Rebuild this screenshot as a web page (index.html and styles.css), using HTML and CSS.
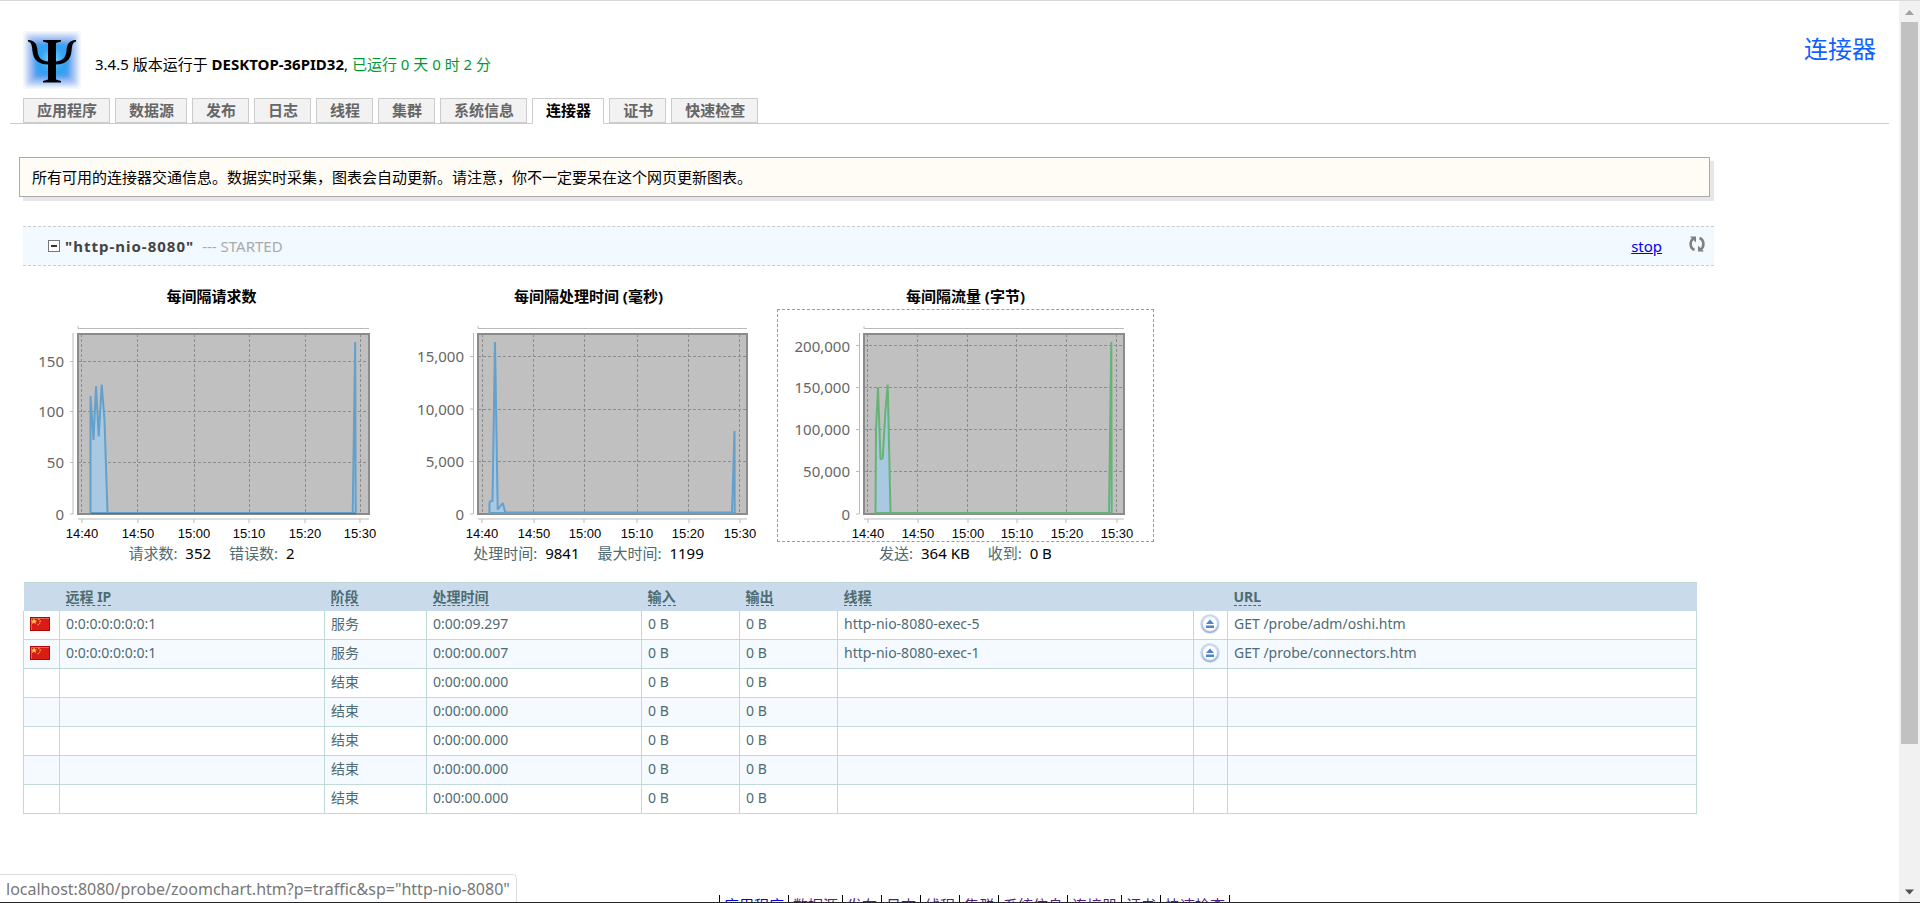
FILE: index.html
```html
<!DOCTYPE html>
<html lang="zh-CN">
<head>
<meta charset="utf-8">
<title>连接器</title>
<link rel="stylesheet" href="styles.css">
</head>
<body>
<div class="viewport">
<div class="page">
  <header class="header">
    <div class="brand">
      <svg class="logo" viewBox="0 0 58 58" aria-label="Probe">
        <defs>
          <radialGradient id="glow" cx="50%" cy="48%" r="60%">
            <stop offset="0" stop-color="#8fdcff"/>
            <stop offset="0.55" stop-color="#2ba3f2"/>
            <stop offset="1" stop-color="#4a9cf0"/>
          </radialGradient>
          <filter id="soft" x="-20%" y="-20%" width="140%" height="140%"><feGaussianBlur stdDeviation="2"/></filter>
        </defs>
        <rect x="2" y="2" width="54" height="54" fill="#cfe0f8" filter="url(#soft)"/>
        <rect x="6" y="6" width="46" height="46" fill="#9dbcf2" filter="url(#soft)"/>
        <rect x="11" y="11" width="36" height="36" fill="url(#glow)" filter="url(#soft)"/>
        <path d="M20 9h18v1.500l-5 1.500v18.500c8-1 10-5 10.500-11 .5-6 2-10 9.500-10.500v1.500c-4 1-4 5-4.500 10-1 8-5 12.500-15.500 13v15l5 1.500v1.500H20v-1.500l5-1.500v-15c-10.500-.5-14.500-5-15.500-13-.5-5-.5-9-4.500-10V9c7.500.5 9 4.500 9.500 10.500.5 6 2.500 10 10.500 11V12l-5-1.500z" fill="#000"/>
      </svg>
      <p class="version">3.4.5 版本运行于 <b>DESKTOP-36PID32</b>, <span class="uptime">已运行 0 天 0 时 2 分</span></p>
    </div>
    <h1 class="title">连接器</h1>
  </header>

  <nav class="tabs">
    <a class="tab" href="#">应用程序</a>
    <a class="tab" href="#">数据源</a>
    <a class="tab" href="#">发布</a>
    <a class="tab" href="#">日志</a>
    <a class="tab" href="#">线程</a>
    <a class="tab" href="#">集群</a>
    <a class="tab" href="#">系统信息</a>
    <a class="tab tab-active" href="#">连接器</a>
    <a class="tab" href="#">证书</a>
    <a class="tab" href="#">快速检查</a>
  </nav>

  <p class="notice">所有可用的连接器交通信息。数据实时采集，图表会自动更新。请注意，你不一定要呆在这个网页更新图表。</p>

  <main class="connector">
    <div class="bar">
      <button class="icon-button" type="button" aria-label="折叠">
        <svg width="12" height="12" viewBox="0 0 12 12"><rect x="0.500" y="0.500" width="11" height="11" fill="#fff" stroke="#777"/><path d="M3 6h6" stroke="#333" stroke-width="2"/></svg>
      </button>
      <h2 class="name">"http-nio-8080"</h2>
      <span class="state">--- STARTED</span>
      <a class="stop" href="#">stop</a>
      <button class="icon-button refresh" type="button" aria-label="刷新">
        <svg width="16" height="16" viewBox="0 0 16 16" fill="none" stroke="#808080" stroke-width="2.600"><path d="M5.500 14C.5 12 .5 5 4.500 2.500M10.500 2C15.500 4 15.500 11 11.500 13.500"/><path d="M1 .5h6v6zM15 15.500H9v-6z" fill="#808080" stroke="none"/></svg>
      </button>
    </div>

    <div class="charts">
      <section class="chart">
        <h3 class="chart-title">每间隔请求数</h3>
        <a class="chart-link" href="#">
          <svg class="plot" viewBox="24 310 375 231" role="img" aria-label="每间隔请求数">
            <rect class="area" x="78" y="334" width="291" height="180"/>
            <path class="axis" d="M78 326v2.500h291M73 333v181M78 519h291M70 361.500h3M70 411.500h3M70 462.500h3M70 514h3M82 519v4M138 519v4M194 519v4M249 519v4M305 519v4M360 519v4"/>
            <path class="grid" d="M78 361.500h291M78 411.500h291M78 462.500h291M81.500 334v180M137.500 334v180M194.500 334v180M249.500 334v180M305.500 334v180M360.500 334v180"/>
            <path class="series" d="M90.500 513V396L93.500 440 96 386 98.700 436.500 101.700 384.500 104.500 420 107.500 513H352.700L355.200 342 355.700 513z"/>
            <path class="base" d="M91 513.500h265"/>
            <g class="y-labels"><text x="64" y="367">150</text><text x="64" y="417">100</text><text x="64" y="468">50</text><text x="64" y="520">0</text></g>
            <g class="x-labels"><text x="82" y="538">14:40</text><text x="138" y="538">14:50</text><text x="194" y="538">15:00</text><text x="249" y="538">15:10</text><text x="305" y="538">15:20</text><text x="360" y="538">15:30</text></g>
          </svg>
        </a>
        <p class="stats"><span>请求数: <b>352</b></span><span>错误数: <b>2</b></span></p>
      </section>

      <section class="chart">
        <h3 class="chart-title">每间隔处理时间 (毫秒)</h3>
        <a class="chart-link" href="#">
          <svg class="plot" viewBox="401 310 375 231" role="img" aria-label="每间隔处理时间">
            <rect class="area" x="478" y="334" width="269" height="180"/>
            <path class="axis" d="M478 326v2.500h269M473.500 333v181M478 519h269M470 356.500h3M470 409h3M470 461.500h3M470 514h3M482 519v4M534 519v4M584 519v4M637 519v4M689 519v4M740 519v4"/>
            <path class="grid" d="M478 356.500h269M478 409.500h269M478 461.500h269M482.500 334v180M533.500 334v180M584.500 334v180M637.500 334v180M688.500 334v180M739.500 334v180"/>
            <path class="series" d="M489.500 513V501.700L492.500 501 495 342 497.700 509.500 502.800 503 505.300 512.500H732L734.500 431 734.700 513z"/>
            <g class="y-labels"><text x="464" y="362">15,000</text><text x="464" y="415">10,000</text><text x="464" y="467">5,000</text><text x="464" y="520">0</text></g>
            <g class="x-labels"><text x="482" y="538">14:40</text><text x="534" y="538">14:50</text><text x="585" y="538">15:00</text><text x="637" y="538">15:10</text><text x="688" y="538">15:20</text><text x="740" y="538">15:30</text></g>
          </svg>
        </a>
        <p class="stats"><span>处理时间: <b>9841</b></span><span>最大时间: <b>1199</b></span></p>
      </section>

      <section class="chart">
        <h3 class="chart-title">每间隔流量 (字节)</h3>
        <a class="chart-link chart-hover" href="#">
          <svg class="plot" viewBox="778 310 375 231" role="img" aria-label="每间隔流量">
            <rect class="area" x="864" y="334" width="260" height="180"/>
            <path class="axis" d="M864 326v2.500h260M859.500 333v181M864 519h260M856 345.500h3M856 387.500h3M856 429.500h3M856 471.500h3M856 514h3M868 519v4M918 519v4M968 519v4M1017 519v4M1066 519v4M1117 519v4"/>
            <path class="grid" d="M864 345.500h260M864 387.500h260M864 429.500h260M864 471.500h260M867.500 334v180M917.500 334v180M967.500 334v180M1016.500 334v180M1066.500 334v180M1116.500 334v180"/>
            <path class="series series-green" d="M875.500 513L876 430 878 387.500 880.500 459.300 882.700 458.300 885.500 410 887.700 384.500 890.500 513H1109L1111.300 342 1111.700 513z"/>
            <g class="y-labels"><text x="850" y="352">200,000</text><text x="850" y="393">150,000</text><text x="850" y="435">100,000</text><text x="850" y="477">50,000</text><text x="850" y="520">0</text></g>
            <g class="x-labels"><text x="868" y="538">14:40</text><text x="918" y="538">14:50</text><text x="968" y="538">15:00</text><text x="1017" y="538">15:10</text><text x="1067" y="538">15:20</text><text x="1117" y="538">15:30</text></g>
          </svg>
        </a>
        <p class="stats"><span>发送: <b>364 KB</b></span><span>收到: <b>0 B</b></span></p>
      </section>
    </div>

    <svg class="symbols" aria-hidden="true">
      <symbol id="flag" viewBox="0 0 20 14">
        <rect width="20" height="14" fill="#b00808"/>
        <rect x="1" y="1" width="18" height="12" fill="#e2605c"/>
        <rect x="2" y="2" width="17" height="11" fill="#da1c16"/>
        <path d="M4 1.500l1 2h2L5.500 5l.5 2-2-1.200L2 7l.5-2L1 3.500h2z" fill="#ffc94a"/>
        <path d="M8 1.500h1.500V3H8zM9.500 3.500H11V5H9.500zM9 5.800h1.200v1.200H9zM7.500 7h1.300v1.200H7.500z" fill="#f7a33a"/>
      </symbol>
      <symbol id="eject" viewBox="0 0 20 20">
        <circle cx="10" cy="10" r="9.800" fill="#c4d8f4"/>
        <circle cx="10" cy="10.800" r="8.200" fill="#9fb0c9"/>
        <circle cx="10" cy="9.800" r="7.700" fill="#dfe6f1"/>
        <circle cx="10" cy="9.700" r="6.700" fill="#fcfdff"/>
        <path d="M10 5.500l4 4.500H6zM6 11.500h8v2.500H6z" fill="#4f83cb"/>
      </symbol>
    </svg>

    <table class="requests">
      <colgroup><col class="c-flag"><col class="c-ip"><col class="c-stage"><col class="c-time"><col class="c-io"><col class="c-io"><col class="c-thread"><col class="c-action"><col></colgroup>
      <thead>
        <tr><th></th><th><a href="#">远程 IP</a></th><th><a href="#">阶段</a></th><th><a href="#">处理时间</a></th><th><a href="#">输入</a></th><th><a href="#">输出</a></th><th><a href="#">线程</a></th><th></th><th><a href="#">URL</a></th></tr>
      </thead>
      <tbody>
        <tr><td><svg class="flag"><use href="#flag"/></svg></td><td>0:0:0:0:0:0:0:1</td><td>服务</td><td>0:00:09.297</td><td>0 B</td><td>0 B</td><td>http-nio-8080-exec-5</td><td><svg class="eject"><use href="#eject"/></svg></td><td>GET /probe/adm/oshi.htm</td></tr>
        <tr><td><svg class="flag"><use href="#flag"/></svg></td><td>0:0:0:0:0:0:0:1</td><td>服务</td><td>0:00:00.007</td><td>0 B</td><td>0 B</td><td>http-nio-8080-exec-1</td><td><svg class="eject"><use href="#eject"/></svg></td><td>GET /probe/connectors.htm</td></tr>
        <tr><td></td><td></td><td>结束</td><td>0:00:00.000</td><td>0 B</td><td>0 B</td><td></td><td></td><td></td></tr>
        <tr><td></td><td></td><td>结束</td><td>0:00:00.000</td><td>0 B</td><td>0 B</td><td></td><td></td><td></td></tr>
        <tr><td></td><td></td><td>结束</td><td>0:00:00.000</td><td>0 B</td><td>0 B</td><td></td><td></td><td></td></tr>
        <tr><td></td><td></td><td>结束</td><td>0:00:00.000</td><td>0 B</td><td>0 B</td><td></td><td></td><td></td></tr>
        <tr><td></td><td></td><td>结束</td><td>0:00:00.000</td><td>0 B</td><td>0 B</td><td></td><td></td><td></td></tr>
      </tbody>
    </table>
  </main>

  <footer class="footer">
    <a class="unvisited" href="#">应用程序</a>
    <a href="#">数据源</a>
    <a href="#">发布</a>
    <a href="#">日志</a>
    <a href="#">线程</a>
    <a href="#">集群</a>
    <a href="#">系统信息</a>
    <a href="#">连接器</a>
    <a href="#">证书</a>
    <a href="#">快速检查</a>
  </footer>
</div>

<div class="scrollbar">
  <svg class="arrow" viewBox="0 0 21 21"><path d="M10.500 9l4.500 5H6z" fill="#a0a0a0"/></svg>
  <div class="track"><div class="thumb"></div></div>
  <svg class="arrow" viewBox="0 0 21 21"><path d="M10.500 13.500l4.500-5H6z" fill="#505050"/></svg>
</div>
</div>
<div class="status">localhost:8080/probe/zoomchart.htm?p=traffic&amp;sp="http-nio-8080"</div>
</body>
</html>
```
FILE: styles.css
```css
* {
  box-sizing: border-box;
}

body {
  margin: 0;
  background: #fff;
  color: #000;
  font: 15px/20px "Noto Sans", "Noto Sans CJK SC", sans-serif;
}

h1, h2, h3, p {
  margin: 0;
}

.viewport {
  display: flex;
  height: 100vh;
  overflow: hidden;
  border-top: 1px solid #d9d9de;
  border-bottom: 1px solid #26262a;
}

.page {
  flex: 1;
  min-width: 0;
  overflow: hidden;
  padding: 0 10px;
}

.header {
  display: flex;
  justify-content: space-between;
  align-items: flex-start;
  height: 97px;
  padding: 30px 13px 0;
}

.brand {
  display: flex;
  gap: 14px;
}

.logo {
  width: 58px;
  height: 58px;
}

.version {
  padding-top: 23px;
}

.uptime {
  color: #093;
}

.title {
  color: #0f62ff;
  font-size: 24px;
  font-weight: 400;
  line-height: 36px;
}

.tabs {
  display: flex;
  gap: 5px;
  padding-left: 13px;
  border-bottom: 1px solid #ccc;
}

.tab {
  padding: 1px 12px 2px 13px;
  border: 1px solid #ccc;
  background: #f2f2f2;
  color: #666;
  font-weight: 700;
  text-decoration: none;
}

.tab-active {
  margin-bottom: -1px;
  border-bottom-color: #fff;
  background: #fff;
  color: #000;
}

.notice {
  width: 90%;
  margin: 33px 0 29px 9px;
  padding: 9px 12px;
  border: 1px solid #aaa;
  background: #fffcf5;
  box-shadow: 4px 4px 0 #e6e6e6;
}

.connector {
  width: 90%;
  margin-left: 13px;
}

.bar {
  display: flex;
  align-items: center;
  height: 40px;
  padding: 0 9px 0 25px;
  border: dashed #ccc;
  border-width: 1px 0;
  background: #f2f9ff;
}

.icon-button {
  display: flex;
  padding: 0;
  border: 0;
  background: none;
}

.name {
  margin: 0 8px 0 5px;
  color: #444;
  font-size: 15px;
  letter-spacing: 1px;
}

.state {
  color: #aaa;
}

.stop {
  margin-left: auto;
  color: #00e;
}

.refresh {
  margin: 0 0 4px 27px;
}

.charts {
  display: flex;
  padding-top: 20px;
}

.chart {
  flex: 0 0 377px;
  text-align: center;
}

.chart-title {
  padding-bottom: 3px;
  font-size: 15px;
  line-height: 20px;
}

.chart-link {
  display: block;
  border: 1px dashed transparent;
}

.chart-hover {
  border-color: #ff7f27;
}

.plot {
  display: block;
  width: 100%;
}

.area {
  fill: #c0c0c0;
  stroke: #8b8b8b;
  stroke-width: 2;
}

.axis {
  fill: none;
  stroke: #bbb;
}

.grid {
  fill: none;
  stroke: #8c8c8c;
  stroke-dasharray: 3 2;
}

.series {
  fill: #a9c9e2;
  stroke: #65a0ca;
  stroke-width: 2;
  stroke-linejoin: bevel;
}

.series-green {
  stroke: #66b375;
}

.base {
  stroke: #66668f;
}

.y-labels {
  fill: #666;
  font-size: 15px;
  text-anchor: end;
}

.x-labels {
  fill: #000;
  font-family: "Liberation Sans", sans-serif;
  font-size: 13px;
  text-anchor: middle;
}

.stats {
  display: flex;
  justify-content: center;
  gap: 18px;
  padding-top: 1px;
  color: #4f6b72;
}

.stats b {
  margin-left: 4px;
  color: #000;
  font-weight: 400;
}

.symbols {
  display: none;
}

.requests {
  width: 99%;
  margin-top: 19px;
  border-collapse: collapse;
  table-layout: fixed;
  color: #4f6b72;
  font-size: 14px;
}

.c-flag { width: 36px; }
.c-ip { width: 265px; }
.c-stage { width: 102px; }
.c-time { width: 215px; }
.c-io { width: 98px; }
.c-thread { width: 356px; }
.c-action { width: 34px; }

.requests th {
  height: 28px;
  padding: 0 6px;
  border-top: 1px solid #c1dad7;
  background: #c9dbea;
  text-align: left;
}

.requests th a {
  display: inline-block;
  border-bottom: 1px dashed #4f6b72;
  color: inherit;
  line-height: 17px;
  text-decoration: none;
}

.requests td {
  height: 29px;
  padding: 0 6px 2px;
  border: 1px solid #c1dad7;
  line-height: 20px;
}

.requests thead + tbody tr:first-child td {
  border-top: 0;
}

.requests tbody tr:nth-child(even) {
  background: #f4faff;
}

.flag {
  display: block;
  width: 20px;
  height: 14px;
}

.eject {
  display: block;
  width: 20px;
  height: 20px;
}

.footer {
  display: flex;
  justify-content: center;
  margin-top: 81px;
  padding-left: 50px;
}

.footer a {
  padding: 0 4px;
  border-right: 1px solid #000;
  color: #551a8b;
}

.footer .unvisited {
  border-left: 1px solid #000;
  color: #00e;
}

.scrollbar {
  display: flex;
  flex-direction: column;
  width: 21px;
  background: #f1f1f1;
}

.arrow {
  width: 21px;
  height: 21px;
}

.track {
  flex: 1;
  padding: 0 2px;
}

.thumb {
  height: 84%;
  background: #c1c1c1;
}

.status {
  position: fixed;
  bottom: 1px;
  left: 0;
  padding: 2px 6px 1px;
  border: solid #dcdcdc;
  border-width: 1px 1px 0 0;
  border-radius: 0 5px 0 0;
  background: #fff;
  color: #777;
  font-size: 16px;
  line-height: 24px;
}
```
